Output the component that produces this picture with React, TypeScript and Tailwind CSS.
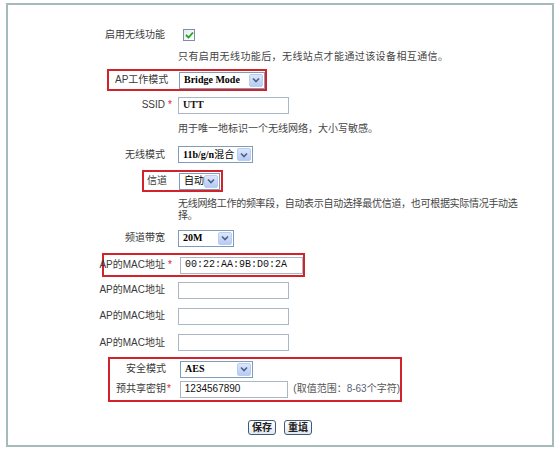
import React from "react";

const font = "font-['Liberation_Sans','Noto_Sans_CJK_SC',sans-serif]";
const mono = "font-['Liberation_Mono','Noto_Sans_CJK_SC',monospace]";
const serif = "font-['Liberation_Serif','Noto_Sans_CJK_SC',serif]";

const Arrow = () => (
  <div className="flex h-[13px] w-[14px] items-center justify-center rounded-[2px] border border-[#b9cdf2] bg-gradient-to-b from-[#dce6fb] to-[#b6cbf3]">
    <svg width="8" height="6" viewBox="0 0 8 6">
      <path d="M1 1.5 L4 4.5 L7 1.5" fill="none" stroke="#4d6185" strokeWidth="1.6" />
    </svg>
  </div>
);

const Select = ({ className, children }: { className: string; children: React.ReactNode }) => (
  <div className={`flex h-[17px] items-center justify-between border border-[#7f9db9] bg-white pl-[4px] pr-[1px] ${className}`}>
    <span className="whitespace-nowrap leading-none">{children}</span>
    <Arrow />
  </div>
);

const Input = ({ className, value = "", valueClass = "" }: { className: string; value?: string; valueClass?: string }) => (
  <div className={`flex h-[17px] items-center border border-[#a9b7c6] bg-white pl-[4px] ${className}`}>
    <span className={`whitespace-nowrap leading-none text-[#111] ${valueClass}`}>{value}</span>
  </div>
);

const Star = () => <span className="text-[10px] leading-none text-[#e1171e]">*</span>;

const Label = ({ w, children }: { w: string; children: React.ReactNode }) => (
  <div className={`flex shrink-0 justify-end whitespace-nowrap leading-none text-[#3a3a3a] ${w}`}>{children}</div>
);

const PlainRow = ({ h, label, star, children }: { h: string; label: string; star?: boolean; children: React.ReactNode }) => (
  <div className={`flex items-center ${h}`}>
    <Label w="w-[157px]">{label}</Label>
    <div className="flex w-[13px] shrink-0 pl-[3px]">{star && <Star />}</div>
    {children}
  </div>
);

const Hint = ({ h, children }: { h: string; children: React.ReactNode }) => (
  <div className={`flex items-center pl-[170px] text-[#444] leading-none whitespace-nowrap ${h}`}>{children}</div>
);

export default function App() {
  return (
    <div className={`h-[453px] w-[560px] bg-white pt-[3px] text-[10px] ${font}`}>
      <div className="ml-[6px] h-[444px] w-[548px] border-2 border-[#a3bbb9]">
        <div className="h-[19px]" />

        <div className="flex h-[21px] items-center">
          <Label w="w-[157px]">启用无线功能</Label>
          <div className="ml-[18px] flex h-[12px] w-[12px] items-center justify-center border border-[#7a8fa8] bg-gradient-to-br from-[#e6eaee] to-white">
            <svg width="9" height="8" viewBox="0 0 9 8">
              <path d="M1 4 L3.5 6.5 L8 1.5" fill="none" stroke="#21a121" strokeWidth="1.8" />
            </svg>
          </div>
        </div>

        <Hint h="h-[24px] tracking-[0.4px]">只有启用无线功能后，无线站点才能通过该设备相互通信。</Hint>

        <div className="flex h-[22px]">
          <div className="ml-[99px] flex items-center border-2 border-[#d2232b]">
            <div className="w-[70px] whitespace-nowrap pl-[6px] leading-none text-[#3a3a3a]">AP工作模式</div>
            <Select className={`w-[86px] font-bold ${serif}`}>Bridge Mode</Select>
          </div>
        </div>

        <PlainRow h="h-[28px]" label="SSID" star>
          <Input className="w-[111px]" value="UTT" valueClass={`font-bold ${serif}`} />
        </PlainRow>

        <Hint h="h-[20px]">用于唯一地标识一个无线网络，大小写敏感。</Hint>

        <PlainRow h="h-[31px]" label="无线模式">
          <Select className="w-[75px]">
            <span className={`font-bold ${serif}`}>11b/g/n</span>混合
          </Select>
        </PlainRow>

        <div className="flex h-[22px]">
          <div className="ml-[134px] flex items-center border-2 border-[#d2232b] pr-[1px]">
            <div className="w-[35px] whitespace-nowrap pl-[3px] leading-none text-[#3a3a3a]">信道</div>
            <Select className="w-[41px]">自动</Select>
          </div>
        </div>

        <div className="h-[35px] pl-[170px] pt-[6px] leading-[12px] tracking-[-0.3px] text-[#444]">
          <div className="whitespace-nowrap">无线网络工作的频率段，自动表示自动选择最优信道，也可根据实际情况手动选</div>
          <div>择。</div>
        </div>

        <PlainRow h="h-[22px]" label="频道带宽">
          <Select className={`w-[56px] font-bold ${serif}`}>20M</Select>
        </PlainRow>

        <div className="h-[4px]" />

        <div className="flex h-[24px]">
          <div className="ml-[94px] flex items-center border-2 border-[#d2232b]">
            <Label w="w-[61px]">AP的MAC地址</Label>
            <div className="flex w-[15px] pl-[3px]">
              <Star />
            </div>
            <Input className="w-[123px]" value="00:22:AA:9B:D0:2A" valueClass={`${mono} text-[10px]`} />
          </div>
        </div>

        <PlainRow h="h-[26px]" label="AP的MAC地址">
          <Input className="w-[111px]" />
        </PlainRow>
        <PlainRow h="h-[26px]" label="AP的MAC地址">
          <Input className="w-[111px]" />
        </PlainRow>
        <PlainRow h="h-[27px]" label="AP的MAC地址">
          <Input className="w-[111px]" />
        </PlainRow>

        <div className="h-[1px]" />

        <div className="ml-[100px] flex h-[45px] w-[294px] flex-col border-2 border-[#d2232b]">
          <div className="flex h-[19px] items-center pt-[1px]">
            <Label w="w-[56px]">安全模式</Label>
            <div className="w-[14px]" />
            <Select className={`w-[73px] font-bold ${serif}`}>AES</Select>
          </div>
          <div className="flex h-[22px] items-center">
            <Label w="w-[56px]">预共享密钥</Label>
            <div className="flex w-[14px] pl-[1px]">
              <Star />
            </div>
            <Input className="w-[110px]" value="1234567890" valueClass="text-[10px]" />
            <span className="ml-[5px] whitespace-nowrap leading-none text-[#555]">
              (取值范围：<span className="text-[#5b6478]">8-63</span>个字符)
            </span>
          </div>
        </div>

        <div className="h-[18px]" />

        <div className="flex h-[15px] justify-center gap-[8px]">
          {["保存", "重填"].map((t) => (
            <button
              key={t}
              className="flex h-[15px] w-[28px] items-center justify-center rounded-[3px] border border-[#3f5b78] bg-gradient-to-b from-white to-[#e3e8ee] text-[10px] font-bold leading-none text-[#222]"
            >
              {t}
            </button>
          ))}
        </div>
      </div>
    </div>
  );
}
